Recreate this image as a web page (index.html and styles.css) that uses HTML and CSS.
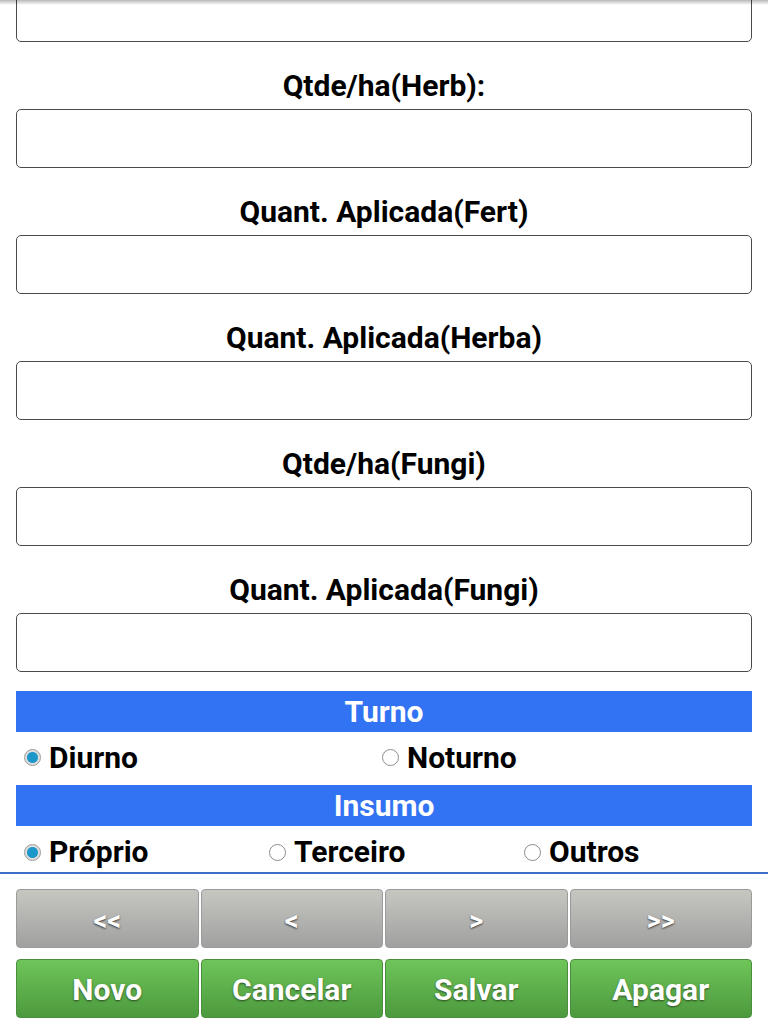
FILE: index.html
```html
<!DOCTYPE html>
<html lang="pt">
<head>
<meta charset="utf-8">
<link rel="stylesheet" href="styles.css">
</head>
<body>
<div class="topshadow"></div>
<div class="form">
  <input class="field first" type="text">
  <label class="lbl">Qtde/ha(Herb):</label>
  <input class="field" type="text">
  <label class="lbl">Quant. Aplicada(Fert)</label>
  <input class="field" type="text">
  <label class="lbl">Quant. Aplicada(Herba)</label>
  <input class="field" type="text">
  <label class="lbl">Qtde/ha(Fungi)</label>
  <input class="field" type="text">
  <label class="lbl">Quant. Aplicada(Fungi)</label>
  <input class="field" type="text">

  <div class="section">Turno</div>
  <div class="radios turno">
    <label class="opt"><span class="radio checked"></span>Diurno</label>
    <label class="opt"><span class="radio"></span>Noturno</label>
  </div>
  <div class="section">Insumo</div>
  <div class="radios insumo">
    <label class="opt"><span class="radio checked"></span>Próprio</label>
    <label class="opt"><span class="radio"></span>Terceiro</label>
    <label class="opt"><span class="radio"></span>Outros</label>
  </div>
</div>
<div class="divider"></div>
<div class="buttons">
  <div class="row">
    <button class="btn gray">&lt;&lt;</button>
    <button class="btn gray">&lt;</button>
    <button class="btn gray">&gt;</button>
    <button class="btn gray">&gt;&gt;</button>
  </div>
  <div class="row">
    <button class="btn green">Novo</button>
    <button class="btn green">Cancelar</button>
    <button class="btn green">Salvar</button>
    <button class="btn green">Apagar</button>
  </div>
</div>
</body>
</html>
```
FILE: styles.css
```css
html, body {
  margin: 0;
  padding: 0;
  background: #ffffff;
  font-family: Roboto, "Liberation Sans", Arial, sans-serif;
  color: #000;
  overflow: hidden;
}
.topshadow {
  position: fixed;
  left: 0;
  top: 0;
  right: 0;
  height: 5px;
  background: linear-gradient(to bottom, rgba(0,0,0,0.28), rgba(0,0,0,0));
  z-index: 5;
}
.form {
  display: flex;
  flex-direction: column;
  padding: 0 16px;
}
.field {
  display: block;
  box-sizing: border-box;
  width: 100%;
  height: 59px;
  margin: 0;
  border: 1px solid #4a4a4a;
  border-radius: 5px;
  background: #fff;
  outline: none;
}
.field.first {
  margin-top: -17px;
}
.lbl {
  display: block;
  text-align: center;
  font-weight: 700;
  font-size: 30px;
  line-height: 28px;
  margin: 30px 0 9px;
}
.section {
  background: #3173f2;
  color: #fff;
  text-align: center;
  font-weight: 700;
  font-size: 30px;
  line-height: 42px;
  height: 41px;
}
.form .field:last-of-type {
  margin-bottom: 19px;
}
.radios {
  display: grid;
  align-items: center;
}
.turno {
  grid-template-columns: 358px 1fr;
  height: 53px;
}
.insumo {
  grid-template-columns: 245px 255px 1fr;
  height: 46px;
}
.opt {
  display: flex;
  align-items: center;
  gap: 8px;
  padding-left: 8px;
  font-weight: 700;
  font-size: 30px;
  line-height: 28px;
}
.turno .opt {
  padding-bottom: 2px;
}
.insumo .opt {
  padding-top: 6px;
}
.radio {
  box-sizing: border-box;
  width: 17px;
  height: 17px;
  border-radius: 50%;
  border: 1px solid #8c8c8c;
  background: #fff;
  flex: none;
}
.radio.checked {
  background: radial-gradient(circle, #1b97c9 0, #1b97c9 5px, #dcdcdc 6px, #e8e8e8 100%);
  border-color: #9a9a9a;
}
.divider {
  height: 2px;
  background: #3c70c6;
}
.buttons {
  padding: 15px 16px 0;
  display: flex;
  flex-direction: column;
  gap: 11px;
}
.row {
  display: grid;
  grid-template-columns: repeat(4, 1fr);
  gap: 2px;
}
.btn {
  height: 59px;
  margin: 0;
  border-radius: 4px;
  font-family: Roboto, "Liberation Sans", Arial, sans-serif;
  font-weight: 700;
  color: #fff;
  padding: 0;
}
.gray {
  border: 1px solid #9a9a9a;
  background: linear-gradient(to bottom, #c6c6c1, #a0a0a0);
  font-size: 27px;
  padding-top: 4px;
  text-shadow: 0 1px 2px #333;
}
.green {
  border: 1px solid #4a8f3c;
  background: linear-gradient(to bottom, #6fc55a, #4c993d);
  font-size: 30px;
  padding-top: 2px;
  text-shadow: 0 1px 2px #2a4a22;
}
```
